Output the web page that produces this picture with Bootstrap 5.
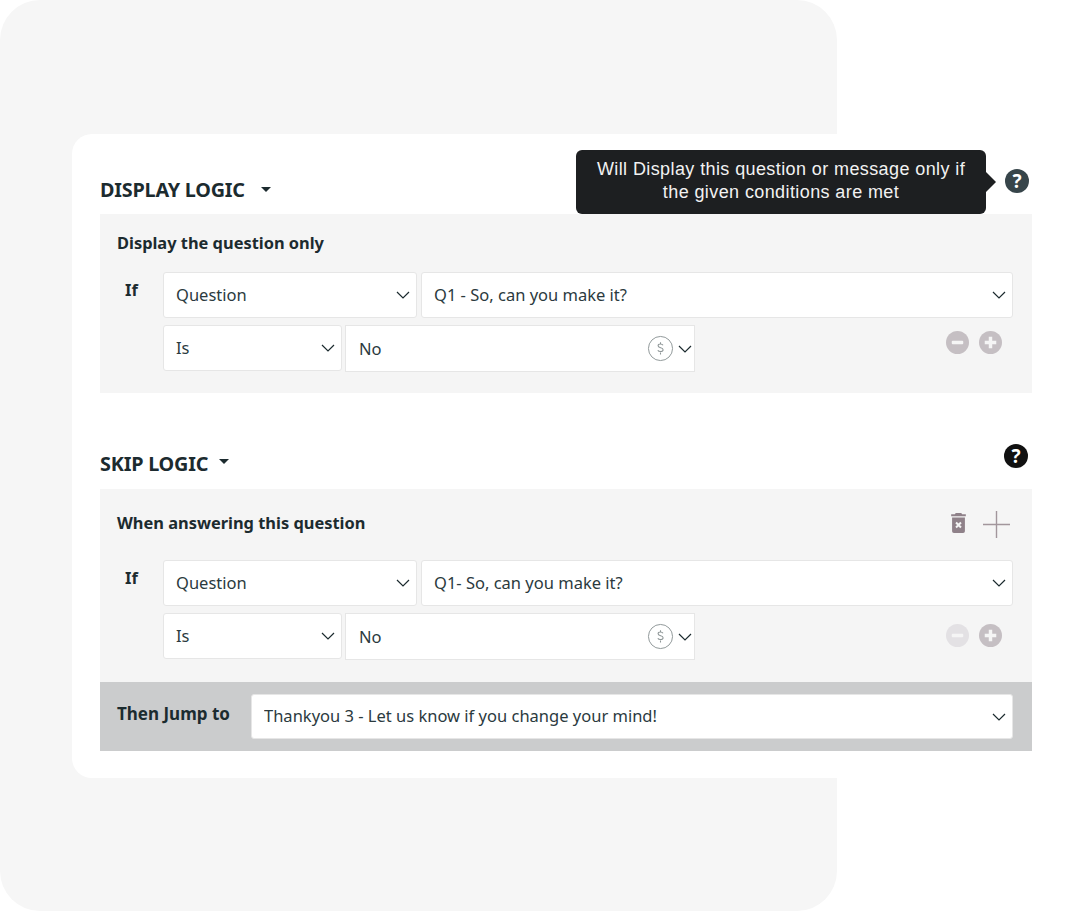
<!DOCTYPE html>
<html lang="en">

<head>
  <meta charset="UTF-8" />
  <title>Display and skip logic</title>
  <link href="https://cdn.jsdelivr.net/npm/bootstrap@5.3.2/dist/css/bootstrap.min.css" rel="stylesheet">
  <style>
    body {
      background-color: #fff;
      color: #1c2b2f;
      font-family: "Noto Sans", "Open Sans", sans-serif;
      overflow: hidden;
    }

    .stage {
      position: relative;
      height: 912px;
      padding: 134px 48px 0 72px;
    }

    .backdrop {
      position: absolute;
      left: 0;
      top: 0;
      width: 837px;
      height: 911px;
      background-color: #f6f6f6;
      border-radius: 40px;
    }

    .logic-card {
      position: relative;
      height: 644px;
      padding: 0 0 0 28px;
      background-color: #fff;
      border-radius: 20px 0 0 20px;
    }

    .logic-head {
      position: relative;
      height: 80px;
      padding-top: 42px;
    }

    .skip-head {
      height: 96px;
      padding-top: 57px;
    }

    .logic-title {
      margin: 0;
      font-size: 19.8px;
      line-height: 28px;
      font-weight: 700;
      letter-spacing: -0.2px;
    }

    .logic-title.dropdown-toggle::after {
      margin-left: 16px;
      vertical-align: 5px;
    }

    .skip-head .logic-title.dropdown-toggle::after {
      margin-left: 11px;
      vertical-align: 7px;
    }

    .help-dot {
      position: absolute;
      right: 3px;
      top: 35px;
      width: 24px;
      height: 24px;
      border-radius: 50%;
      background-color: #37454a;
      color: #fff;
      font-size: 19px;
      font-weight: 700;
      line-height: 24px;
      text-align: center;
    }

    .skip-head .help-dot {
      right: 4px;
      top: 51px;
      background-color: #111;
    }

    .tip-box {
      position: absolute;
      left: 476px;
      top: 16px;
      width: 410px;
      height: 64px;
      padding: 8px 18px;
      background-color: #1d1f21;
      border-radius: 6px;
      color: #f2f2f2;
      font-family: "Liberation Sans", Arial, sans-serif;
      font-size: 18px;
      letter-spacing: 0.4px;
      line-height: 23px;
      text-align: center;
    }

    .tip-box::after {
      content: "";
      position: absolute;
      right: -10px;
      top: 22px;
      border-style: solid;
      border-width: 10px 0 10px 10px;
      border-color: transparent transparent transparent #1d1f21;
    }

    .logic-panel {
      background-color: #f5f5f5;
      padding: 0 19px 0 17px;
    }

    .panel-one {
      height: 179px;
    }

    .panel-two {
      height: 193px;
    }

    .panel-label {
      font-size: 16.4px;
      font-weight: 700;
      line-height: 22px;
    }

    .panel-one .panel-label {
      padding-top: 18px;
      height: 58px;
    }

    .panel-two .panel-label {
      padding-top: 23px;
      height: 71px;
    }

    .if-label {
      width: 46px;
      padding: 6px 0 0 8px;
      font-size: 16.5px;
      font-weight: 700;
      line-height: 24px;
    }

    .form-select.rule-select {
      height: 46px;
      padding: 0 30px 0 12px;
      border: 1px solid #e6e6e6;
      border-radius: 3px;
      background-image: url("data:image/svg+xml,%3csvg xmlns='http://www.w3.org/2000/svg' viewBox='0 0 14 8'%3e%3cpath fill='none' stroke='%231c2b2f' stroke-width='1.2' d='M1 1l6 6 6-6'/%3e%3c/svg%3e");
      background-position: right 6px center;
      background-size: 14px 8px;
      color: #2b3a3e;
      font-size: 16.5px;
      box-shadow: none;
    }

    .sel-source {
      width: 254px;
      flex: none;
    }

    .sel-op {
      width: 179px;
      flex: none;
    }

    .value-wrap {
      position: relative;
      width: 350px;
      flex: none;
      margin-left: 3px;
    }

    .form-select.sel-value {
      height: 47px;
      padding-top: 2px;
      padding-left: 13px;
      background-position: right 2px center;
      border-radius: 0;
    }

    .money-icon {
      position: absolute;
      right: 21px;
      top: 10px;
      width: 27px;
      height: 27px;
    }

    .rule-second {
      margin-top: 7px;
    }

    .round-btn {
      width: 23px;
      height: 23px;
      display: block;
    }

    .round-group {
      gap: 10px;
      margin: 6px 11px 0 auto;
    }

    .panel-two .round-group {
      margin-top: 11px;
    }

    .jump-bar {
      height: 69px;
      margin: 0 -19px 0 -17px;
      padding: 12px 19px 0 17px;
      background-color: #cbcccd;
    }

    .jump-label {
      width: 134px;
      flex: none;
      padding-top: 8px;
      font-size: 17px;
      font-weight: 700;
      line-height: 24px;
    }

    .jump-bar .form-select.rule-select {
      height: 45px;
    }

    .tool-icons {
      margin-right: 3px;
    }

    .plus-line {
      margin-top: -1px;
    }
  </style>
</head>

<body>
  <div class="stage">
    <div class="backdrop"></div>

    <div class="logic-card">
      <!-- Display logic -->
      <div class="logic-head">
        <h2 class="logic-title dropdown-toggle d-inline-block">DISPLAY LOGIC</h2>
        <div class="tip-box">Will Display this question or message only if the given conditions are met</div>
        <div class="help-dot">?</div>
      </div>

      <div class="logic-panel panel-one">
        <div class="panel-label">Display the question only</div>
        <div class="d-flex">
          <div class="if-label">If</div>
          <div class="d-flex flex-grow-1 gap-1">
            <select class="form-select rule-select sel-source"><option>Question</option></select>
            <select class="form-select rule-select flex-grow-1"><option>Q1 - So, can you make it?</option></select>
          </div>
        </div>
        <div class="d-flex rule-second">
          <div class="if-label"></div>
          <select class="form-select rule-select sel-op"><option>Is</option></select>
          <div class="value-wrap">
            <select class="form-select rule-select sel-value"><option>No</option></select>
            <svg class="money-icon" viewBox="0 0 28 28" fill="none">
              <circle cx="14" cy="14" r="12.5" stroke="#8e9697" stroke-width="1"/>
              <path d="M16.6 10.6c-.5-.9-1.400-1.300-2.600-1.300-1.400 0-2.500.7-2.500 1.900 0 2.700 5.200 1.300 5.200 4 0 1.200-1.100 2-2.700 2-1.300 0-2.300-.5-2.800-1.500M14 7.600v1.700M14 18.200v1.900" stroke="#8e9697" stroke-width="1.100"/>
            </svg>
          </div>
          <div class="d-flex round-group">
            <svg class="round-btn" viewBox="0 0 24 24"><circle cx="12" cy="12" r="12" fill="#c5bfc3"/><rect x="6" y="10.200" width="12" height="3.600" rx="1" fill="#f5f5f5"/></svg>
            <svg class="round-btn" viewBox="0 0 24 24"><circle cx="12" cy="12" r="12" fill="#c5bfc3"/><path d="M6 12h12M12 6v12" stroke="#f5f5f5" stroke-width="3.600"/></svg>
          </div>
        </div>
      </div>

      <!-- Skip logic -->
      <div class="logic-head skip-head">
        <h2 class="logic-title dropdown-toggle d-inline-block">SKIP LOGIC</h2>
        <div class="help-dot">?</div>
      </div>

      <div class="logic-panel panel-two">
        <div class="d-flex justify-content-between panel-label">
          <div>When answering this question</div>
          <div class="d-flex gap-3 tool-icons">
            <svg width="17" height="22" viewBox="0 0 18 24">
              <path d="M6 1h6l1 1.500h4v2H1v-2h4zM2 6h14v15a2 2 0 0 1-2 2H4a2 2 0 0 1-2-2z" fill="#8f8189"/>
              <path d="M6.300 11.500l5.400 5.400M11.700 11.500l-5.400 5.400" stroke="#f5f5f5" stroke-width="2.200"/>
            </svg>
            <svg class="plus-line" width="27" height="27" viewBox="0 0 27 27">
              <path d="M0 13.500h27M13.500 0v27" stroke="#a2969c" stroke-width="1.400"/>
            </svg>
          </div>
        </div>
        <div class="d-flex">
          <div class="if-label">If</div>
          <div class="d-flex flex-grow-1 gap-1">
            <select class="form-select rule-select sel-source"><option>Question</option></select>
            <select class="form-select rule-select flex-grow-1"><option>Q1- So, can you make it?</option></select>
          </div>
        </div>
        <div class="d-flex rule-second">
          <div class="if-label"></div>
          <select class="form-select rule-select sel-op"><option>Is</option></select>
          <div class="value-wrap">
            <select class="form-select rule-select sel-value"><option>No</option></select>
            <svg class="money-icon" viewBox="0 0 28 28" fill="none">
              <circle cx="14" cy="14" r="12.5" stroke="#8e9697" stroke-width="1"/>
              <path d="M16.6 10.6c-.5-.9-1.400-1.300-2.600-1.300-1.400 0-2.500.7-2.500 1.900 0 2.700 5.200 1.300 5.200 4 0 1.200-1.100 2-2.700 2-1.300 0-2.300-.5-2.800-1.500M14 7.600v1.700M14 18.200v1.900" stroke="#8e9697" stroke-width="1.100"/>
            </svg>
          </div>
          <div class="d-flex round-group">
            <svg class="round-btn" viewBox="0 0 24 24"><circle cx="12" cy="12" r="12" fill="#e3e1e4"/><rect x="6" y="10.200" width="12" height="3.600" rx="1" fill="#f5f5f5"/></svg>
            <svg class="round-btn" viewBox="0 0 24 24"><circle cx="12" cy="12" r="12" fill="#c5bfc3"/><path d="M6 12h12M12 6v12" stroke="#f5f5f5" stroke-width="3.600"/></svg>
          </div>
        </div>
      </div>

      <div class="logic-panel">
        <div class="d-flex jump-bar">
          <div class="jump-label">Then Jump to</div>
          <select class="form-select rule-select flex-grow-1"><option>Thankyou 3 - Let us know if you change your mind!</option></select>
        </div>
      </div>
    </div>
  </div>

  <script src="https://cdn.jsdelivr.net/npm/bootstrap@5.3.2/dist/js/bootstrap.bundle.min.js"></script>
</body>

</html>
